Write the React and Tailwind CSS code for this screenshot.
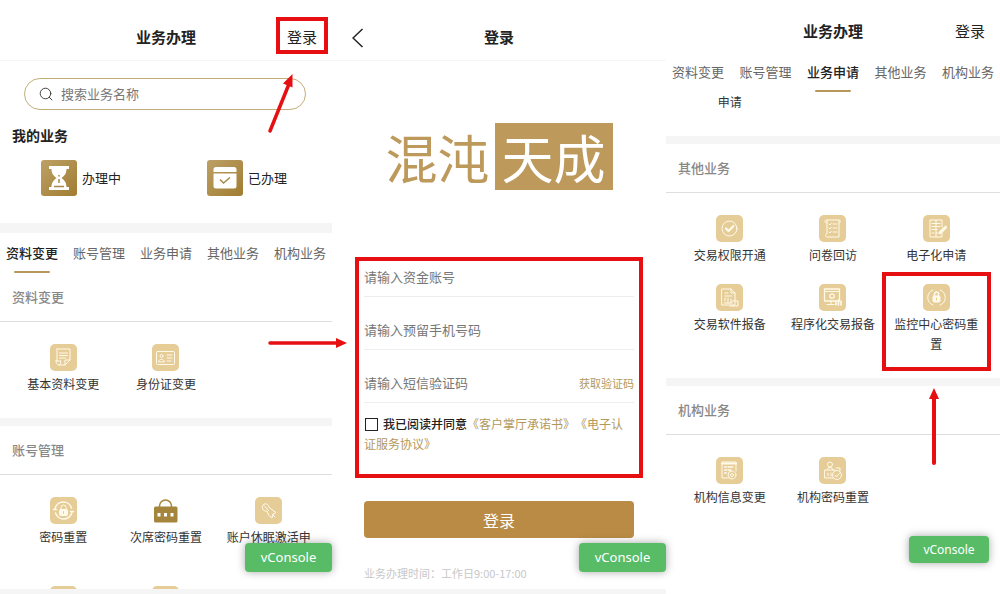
import clsx from 'clsx'

const TABS = ['资料变更', '账号管理', '业务申请', '其他业务', '机构业务']

// Line drawings on a 27x27 tile
const GLYPHS = {
  form: (
    <>
      <path d="M7 5h13v11l-5 5H9" />
      <path d="M7 5v12M20 16h-5v5M9.500 9h8M9.500 11.500h8M9.500 14h6" />
      <path d="M6 17h5c-1 1 0 4-2 4s-3-2-3-4z" />
    </>
  ),
  idCard: (
    <>
      <rect x="4.500" y="7.500" width="18" height="13" rx="1" />
      <circle cx="9.500" cy="12" r="1.500" />
      <path d="M6.500 17.500c.5-3 5.500-3 6 0zM15 11h5M15 14h5M15 17h4" />
    </>
  ),
  lockCycle: (
    <>
      <path d="M5 12a8.500 8.500 0 0 1 16.500-1M22 15a8.500 8.500 0 0 1-16.500 1" strokeWidth="1.500" />
      <path d="M3.500 12.500h3M20.500 14.500h3" strokeWidth="1.500" />
      <path d="M11 12.500v-2a2.500 2.500 0 0 1 5 0v2" />
      <rect x="9.500" y="12.500" width="8" height="6" rx="1" fill="currentColor" />
      <path d="M13.500 14.500v2" stroke="#e6cc97" />
    </>
  ),
  key: (
    <>
      <path d="M7.500 11.500c-1.500-4 3.500-6.500 6-3l.5 2 7 5-3 1.500-1 4-3.500-3-1.500-4c-2 .5-4-.5-4.500-2.500z" />
      <path d="M9.500 9l4 4.500M17.500 17.500l2.500 2.500" />
    </>
  ),
  check: (
    <>
      <circle cx="13.500" cy="13.500" r="7.500" />
      <path d="M10 13.500l2.500 2.500 5-5" strokeWidth="2.200" />
    </>
  ),
  scroll: (
    <>
      <path d="M8 5h12v17H8c-2 0-2-3 0-3V5c-3 0-3 3 0 3" />
      <path d="M20 5c2 0 2 3 0 3M10 9l1 1 1.500-2M14 9h4M10 13l1 1 1.500-2M14 13h4M10 17l1 1 1.500-2M14 17h4" />
    </>
  ),
  signForm: (
    <>
      <path d="M19 12V5H7v17h12v-4" />
      <path d="M9 8.500h8M9 11.500h8M9 14.500h5M9 18h2M13 18h2M13 5v17" />
      <path d="M22.500 11l-6 5.500-.5 2.500 2.500-1 5-5z" fill="currentColor" />
    </>
  ),
  report: (
    <>
      <path d="M6 5h9l4 4v12H6zM15 5v4h4" />
      <path d="M9 9h3M9 12h7M9 17v-3M12 19v-5M15 19v-4M8 19h8" />
      <path d="M16 17h6v5h-8" />
    </>
  ),
  monitor: (
    <>
      <rect x="5.500" y="5" width="15" height="12" strokeWidth="1.300" />
      <path d="M5.500 7.500h15M8 20.500h7M12 17v3" />
      <circle cx="13" cy="12" r="2.200" strokeWidth="1.300" />
      <path d="M17 21v-3M19.500 21v-5M22 21v-4" strokeWidth="1.600" />
    </>
  ),
  lockRing: (
    <>
      <path d="M10 6a8 8 0 0 0 0 15M17 6a8 8 0 0 1 0 15" />
      <path d="M11.500 12v-2a2 2 0 0 1 4 0v2" strokeWidth="1.500" />
      <rect x="10" y="12" width="7" height="6" rx="1" fill="currentColor" />
      <path d="M13.500 14v2" stroke="#e6cc97" />
    </>
  ),
  orgInfo: (
    <>
      <path d="M20 14V5H6v16h6" />
      <path d="M6 6.500h14" strokeWidth="2" />
      <path d="M8.500 10h2M12 10h5M8.500 13h2M12 13h3M8.500 16h2" strokeWidth="1.400" />
      <circle cx="16" cy="18" r="4" />
      <circle cx="16" cy="18" r="1.500" />
    </>
  ),
  orgLock: (
    <>
      <circle cx="11" cy="7.500" r="2.500" />
      <path d="M8 13c0-3.500 6-3.500 6 0" />
      <rect x="6" y="13" width="10" height="8" />
      <path d="M9 16v3M12 16v3" />
      <circle cx="18" cy="18" r="4.500" fill="#e6cc97" />
      <path d="M16 18l1.500 2 3-4M17 11h4v3" />
    </>
  ),
}

const PROFILE = [
  { label: '基本资料变更', icon: 'form' },
  { label: '身份证变更', icon: 'idCard' },
]

const ACCOUNT = [
  { label: '密码重置', icon: 'lockCycle' },
  { label: '次席密码重置', icon: 'bag' },
  { label: '账户休眠激活申请', icon: 'key' },
  { label: '', icon: 'form' },
  { label: '', icon: 'idCard' },
]

const OTHER = [
  { label: '交易权限开通', icon: 'check' },
  { label: '问卷回访', icon: 'scroll' },
  { label: '电子化申请', icon: 'signForm' },
  { label: '交易软件报备', icon: 'report' },
  { label: '程序化交易报备', icon: 'monitor' },
  { label: '监控中心密码重置', icon: 'lockRing', marked: true },
]

const ORG = [
  { label: '机构信息变更', icon: 'orgInfo' },
  { label: '机构密码重置', icon: 'orgLock' },
]

function TileIcon({ name }) {
  if (name === 'bag') {
    return (
      <svg width="27" height="27" viewBox="0 0 27 27" aria-hidden="true">
        <path d="M7.500 11V9a6 6 0 0 1 12 0v2" fill="none" stroke="#a5853c" strokeWidth="1.500" />
        <rect x="2" y="9.500" width="23.500" height="16" rx="1.500" fill="#a5853c" />
        <path d="M5.500 16h3v3.500h-3zM12 16h3v3.500h-3zM18.500 16h3v3.500h-3z" fill="#fff" />
      </svg>
    )
  }
  return (
    <svg width="27" height="27" viewBox="0 0 27 27" aria-hidden="true" className="text-[#fffaea]">
      <rect width="27" height="27" rx="5" fill="#e6cc97" />
      <g fill="none" stroke="currentColor" strokeWidth="1" strokeLinecap="round" strokeLinejoin="round">
        {GLYPHS[name]}
      </g>
    </svg>
  )
}

function TopBar({ title, className, children }) {
  return (
    <header className={clsx('relative text-center text-[15px] leading-[22px] text-[#222]', className)}>
      <h1 className="font-bold">{title}</h1>
      {children}
    </header>
  )
}

function Tabs({ active }) {
  return (
    <nav className="flex justify-between px-[6px] pt-[10px] text-[13px] leading-5">
      {TABS.map((tab) => (
        <button
          key={tab}
          className={clsx('flex flex-col items-center gap-2', tab === active ? 'font-medium text-[#222]' : 'text-[#666]')}
        >
          {tab}
          <span className={clsx('h-[2px] w-9 rounded-full', tab === active && 'bg-[#b8975a]')} />
        </button>
      ))}
    </nav>
  )
}

function SectionTitle({ children }) {
  return (
    <h2 className="border-b border-[#dedede] px-3 py-[14px] text-[13px] font-medium leading-5 text-[#888]">
      {children}
    </h2>
  )
}

function ServiceGrid({ items }) {
  return (
    <div className="grid grid-cols-3 gap-y-[19px] px-3 pt-[22px] pb-6">
      {items.map((item, i) => (
        <button
          key={i}
          aria-label={item.label || '更多业务'}
          className="relative flex flex-col items-center gap-[3px] self-start px-2 text-xs leading-5 text-[#333]"
        >
          <TileIcon name={item.icon} />
          <span>{item.label}</span>
          {item.marked && (
            <span className="absolute -inset-x-[3px] -top-3 -bottom-[17px] border-4 border-[#e60f12]" />
          )}
        </button>
      ))}
    </div>
  )
}

function Band({ className }) {
  return <div className={clsx('shrink-0 bg-[#f5f5f6]', className)} />
}

function ConsoleButton({ className }) {
  return (
    <button
      className={clsx(
        "absolute rounded bg-[#58bc67] font-['Noto_Sans',sans-serif] text-white shadow-[0_0_8px_rgba(0,0,0,0.35)]",
        className
      )}
    >
      vConsole
    </button>
  )
}

function StatusCard({ label, children }) {
  return (
    <button className="flex items-center gap-[5px] pl-[41px] text-[13px] leading-5 text-[#222]">
      <svg width="36" height="36" viewBox="0 0 36 36" aria-hidden="true">
        <defs>
          <linearGradient id="gold" x1="0" y1="0" x2="1" y2="1">
            <stop offset="0" stopColor="#bda066" />
            <stop offset="1" stopColor="#a07c30" />
          </linearGradient>
        </defs>
        <rect width="36" height="36" rx="3" fill="url(#gold)" />
        {children}
      </svg>
      {label}
    </button>
  )
}

function HomePanel() {
  return (
    <section className="relative flex min-h-0 flex-col">
      <TopBar title="业务办理" className="border-b border-[#f6f6f6] pt-[26px] pb-3">
        <button className="absolute top-[26px] right-[15px]">
          登录
          <span className="absolute -inset-x-[11px] -top-[9px] -bottom-[6px] border-4 border-[#e60f12]" />
        </button>
      </TopBar>
      <div className="min-h-0 flex-1 overflow-hidden">
        <label className="mt-[17px] mr-[26px] ml-6 flex h-8 items-center gap-2 rounded-full border border-[#c3ae78] px-[14px]">
          <svg width="14" height="14" viewBox="0 0 14 14" fill="none" stroke="#444" strokeLinecap="round" aria-hidden="true">
            <circle cx="6.500" cy="6.500" r="5.300" />
            <path d="M10.300 10.300l2.700 2.700" />
          </svg>
          <input
            aria-label="搜索业务名称"
            placeholder="搜索业务名称"
            className="min-w-0 flex-1 text-[13px] leading-5 outline-none placeholder:text-[#777]"
          />
        </label>
        <h2 className="mt-[15px] px-3 text-sm font-bold leading-5 text-[#222]">我的业务</h2>
        <div className="mt-[15px] mb-[27px] grid grid-cols-2">
          <StatusCard label="办理中">
            <path d="M8 6h20v3h-2.500c0 5-2.500 7-5 9 2.500 2 5 4 5 9H28v3H8v-3h2.500c0-5 2.500-7 5-9-2.500-2-5-4-5-9H8z" fill="#fff" />
            <path d="M18 15v1.500M18 19v4M13 26.500h10" stroke="#a88945" strokeWidth="1.500" />
          </StatusCard>
          <StatusCard label="已办理">
            <path d="M9 7h18a2.500 2.500 0 0 1 2.500 2.500V12h-23V9.500A2.500 2.500 0 0 1 9 7z" fill="#fff" />
            <path d="M6.500 13.500h23V26a2.500 2.500 0 0 1-2.500 2.500H9A2.500 2.500 0 0 1 6.500 26z" fill="#fff" />
            <path d="M13 19.500l3.500 3.500 6.500-5.500" fill="none" stroke="#a88945" strokeWidth="1.500" />
          </StatusCard>
        </div>
        <Band className="h-[10px]" />
        <Tabs active="资料变更" />
        <SectionTitle>资料变更</SectionTitle>
        <ServiceGrid items={PROFILE} />
        <Band className="h-2" />
        <SectionTitle>账号管理</SectionTitle>
        <ServiceGrid items={ACCOUNT} />
      </div>
      <Band className="h-[5px]" />
      <ConsoleButton className="right-0 bottom-[22px] h-[29px] w-[87px] text-[13px]" />
      <svg className="absolute top-[74px] right-[37px]" width="28" height="60" viewBox="0 0 28 60" aria-hidden="true">
        <path d="M3 57L22 10" stroke="#e60f12" strokeWidth="3.500" strokeLinecap="round" />
        <path d="M25.500 0L16 9.500l9.500 4z" fill="#e60f12" />
      </svg>
    </section>
  )
}

const FIELDS = [
  { id: 'account', hint: '请输入资金账号' },
  { id: 'phone', hint: '请输入预留手机号码' },
  { id: 'code', hint: '请输入短信验证码' },
]

function LoginPanel() {
  return (
    <section className="relative flex min-h-0 flex-col">
      <TopBar title="登录" className="border-b border-[#f6f6f6] pt-[26px] pb-3">
        <button aria-label="返回" className="absolute top-7 left-5">
          <svg width="12" height="20" viewBox="0 0 12 20" fill="none" stroke="#222" strokeWidth="1.500" aria-hidden="true">
            <path d="M10.500 1L1 10l9.500 9" />
          </svg>
        </button>
      </TopBar>
      <div className="mt-[62px] flex justify-center text-[52px] leading-[67px] text-[#bd9a5c]">
        <span className="w-[109px]">混沌</span>
        <span className="w-[118px] bg-[#bd9a5c] text-center text-white">天成</span>
      </div>
      <form onSubmit={(e) => e.preventDefault()}>
        <div className="relative mx-[23px] mt-[67px] border-4 border-[#e60f12] px-[5px] pb-5">
          {FIELDS.map((field, i) => (
            <div key={field.id} className={clsx('flex h-9 items-center border-b border-[#eee] pb-1', i > 0 && 'mt-[17px]')}>
              <input
                id={field.id}
                aria-label={field.hint}
                placeholder={field.hint}
                className="min-w-0 flex-1 text-[13px] leading-5 outline-none placeholder:text-[#777]"
              />
              {field.id === 'code' && (
                <button type="button" className="text-[11px] leading-5 text-[#b3985c]">获取验证码</button>
              )}
            </div>
          ))}
          <div className="pt-[11px] text-xs leading-5 text-[#b3985c] [text-spacing-trim:space-all]">
            <input
              id="agree"
              type="checkbox"
              className="mr-[5px] ml-px h-[13px] w-[13px] appearance-none border border-[#222] align-[-2px]"
            />
            <label htmlFor="agree" className="font-medium text-[#222]">我已阅读并同意</label>
            <a href="#promise">《客户掌厅承诺书》</a>
            <a href="#agreement">《电子认证服务协议》</a>
          </div>
          <svg className="absolute top-[75px] right-full mr-3" width="80" height="14" viewBox="0 0 80 14" aria-hidden="true">
            <path d="M3 7h66" stroke="#e60f12" strokeWidth="3.500" strokeLinecap="round" />
            <path d="M80 7L69 2v10z" fill="#e60f12" />
          </svg>
        </div>
        <div className="mx-8 mt-[23px]">
          <button className="h-[37px] w-full rounded bg-[#b98b45] text-base text-white">登录</button>
          <p className="mt-[25px] text-[11px] leading-5 text-[#c8c8c8]">业务办理时间：工作日9:00-17:00</p>
        </div>
      </form>
      <Band className="mt-auto h-[5px]" />
      <ConsoleButton className="right-0 bottom-[22px] h-[29px] w-[87px] text-[13px]" />
    </section>
  )
}

function ApplyPanel() {
  return (
    <section className="relative min-h-0">
      <TopBar title="业务办理" className="pt-5 pb-[10px]">
        <button className="absolute top-5 right-[15px]">登录</button>
      </TopBar>
      <Tabs active="业务申请" />
      <div className="grid grid-cols-3 px-3 pb-6 text-center text-xs leading-5 text-[#333]">
        <span>申请</span>
      </div>
      <Band className="h-2" />
      <SectionTitle>其他业务</SectionTitle>
      <ServiceGrid items={OTHER} />
      <Band className="h-2" />
      <SectionTitle>机构业务</SectionTitle>
      <ServiceGrid items={ORG} />
      <svg className="absolute top-[388px] right-[59px]" width="14" height="80" viewBox="0 0 14 80" aria-hidden="true">
        <path d="M7 10v65" stroke="#e60f12" strokeWidth="4" strokeLinecap="round" />
        <path d="M7 0l5 11H2z" fill="#e60f12" />
      </svg>
      <ConsoleButton className="right-[11px] bottom-[31px] h-[27px] w-20 text-xs" />
    </section>
  )
}

export default function App() {
  return (
    <main className="grid h-screen grid-cols-[332fr_334fr_334fr] overflow-hidden bg-white font-['Noto_Sans_CJK_SC',sans-serif]">
      <HomePanel />
      <LoginPanel />
      <ApplyPanel />
    </main>
  )
}
